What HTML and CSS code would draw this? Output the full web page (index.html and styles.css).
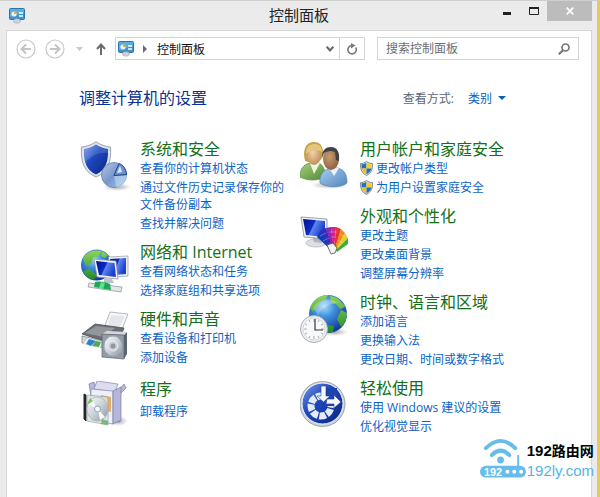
FILE: index.html
```html
<!DOCTYPE html>
<html lang="zh-CN">
<head>
    <meta charset="UTF-8">
    <meta name="viewport" content="width=device-width, initial-scale=1.0">
    <title>控制面板</title>
    <link rel="stylesheet" href="styles.css">
</head>
<body>
    <svg class="defs" aria-hidden="true">
        <defs>
            <linearGradient id="blue" x1="0" y1="0" x2="1" y2="1">
                <stop offset="0" stop-color="#7da2e8"/><stop offset=".4" stop-color="#1f49bd"/><stop offset="1" stop-color="#0b2483"/>
            </linearGradient>
            <linearGradient id="screen" x1="0" y1="0" x2="1" y2=".4">
                <stop offset="0" stop-color="#04108c"/><stop offset=".5" stop-color="#0c2cc4"/><stop offset=".56" stop-color="#5c86ee"/><stop offset="1" stop-color="#1c3fd0"/>
            </linearGradient>
            <linearGradient id="metal" x1="0" y1="0" x2="1" y2="1">
                <stop offset="0" stop-color="#fbfcfd"/><stop offset=".5" stop-color="#cdd3da"/><stop offset="1" stop-color="#8b949f"/>
            </linearGradient>
            <linearGradient id="pie" x1="0" y1="0" x2="1" y2="1">
                <stop offset="0" stop-color="#b5c9e6"/><stop offset=".5" stop-color="#7697cc"/><stop offset="1" stop-color="#a9cbed"/>
            </linearGradient>
            <radialGradient id="ocean" cx=".4" cy=".3" r=".7">
                <stop offset="0" stop-color="#a6dcfa"/><stop offset=".4" stop-color="#3f8fdd"/><stop offset="1" stop-color="#0f3998"/>
            </radialGradient>
            <linearGradient id="land" x1="0" y1="0" x2="0" y2="1">
                <stop offset="0" stop-color="#8fd454"/><stop offset="1" stop-color="#228a2c"/>
            </linearGradient>
            <radialGradient id="skin" cx=".4" cy=".3" r=".8">
                <stop offset="0" stop-color="#f4d3ac"/><stop offset="1" stop-color="#b98554"/>
            </radialGradient>
            <radialGradient id="skinDark" cx=".4" cy=".4" r=".8">
                <stop offset="0" stop-color="#c89b72"/><stop offset="1" stop-color="#7d5233"/>
            </radialGradient>
            <linearGradient id="greenShirt" x1="0" y1="0" x2="1" y2="1">
                <stop offset="0" stop-color="#a8cf7c"/><stop offset="1" stop-color="#4f8b36"/>
            </linearGradient>
            <linearGradient id="blueShirt" x1="0" y1="0" x2="1" y2="1">
                <stop offset="0" stop-color="#a9cdf0"/><stop offset="1" stop-color="#5286c0"/>
            </linearGradient>
            <radialGradient id="shadow">
                <stop offset="0" stop-color="#555" stop-opacity=".55"/><stop offset="1" stop-color="#777" stop-opacity="0"/>
            </radialGradient>
        </defs>
        <symbol id="panelIcon" viewBox="0 0 16 16">
            <rect x=".5" y=".5" width="15" height="11" rx="1" fill="#3c93cf" stroke="#2a76ab"/>
            <path d="M1 1h14v4L1 9z" fill="#73bde9" opacity=".6"/>
            <circle cx="5" cy="6" r="2.6" fill="#e9f4fa"/>
            <path d="M5 6V3a3 3 0 0 1 3 3z" fill="#f0a63a"/>
            <path d="M10 5h4M10 8h4" stroke="#fff" stroke-width="1.3"/>
            <ellipse cx="8" cy="13" rx="3.6" ry="2.2" fill="#cfd3d6" stroke="#9a9fa3" stroke-width=".5"/>
        </symbol>
        <symbol id="uac" viewBox="0 0 14 16">
            <path d="M7 .5C5 2 3 2.6.6 2.8.3 9 2 13 7 15.5 12 13 13.700 9 13.400 2.800 11 2.600 9 2 7 .5z" fill="#dfe4e9" stroke="#6f7c8a"/>
            <path d="M6.900 1.700C5.200 2.800 3.800 3.300 1.700 3.500V8h5.200z" fill="#2070bf"/>
            <path d="M7 1.700c1.800 1.100 3.200 1.600 5.300 1.800V8H7z" fill="#f8cb2c"/>
            <path d="M1.800 8h5.100v6.300C3.800 12.600 2.200 10.700 1.800 8z" fill="#f3c01e"/>
            <path d="M7 8h5.200c-.4 2.700-2 4.600-5.200 6.300z" fill="#2070bf"/>
        </symbol>
    </svg>

    <div class="window">
        <header class="titlebar">
            <svg class="title-icon"><use href="#panelIcon"/></svg>
            <h1>控制面板</h1>
            <div class="window-buttons">
                <button type="button" aria-label="最小化"><svg width="8" height="12"><path d="M0 8.500h8" stroke="#222" stroke-width="3"/></svg></button>
                <button type="button" aria-label="最大化"><svg width="10" height="8"><path d="M.5 1h9v6.500h-9z" fill="none" stroke="#222"/><path d="M0 1h10" stroke="#222" stroke-width="2"/></svg></button>
                <button type="button" class="close" aria-label="关闭"><svg width="8" height="8"><path d="M.7.700l6.600 6.600M7.300.700L.7 7.300" stroke="#fff" stroke-width="1.700"/></svg></button>
            </div>
        </header>

        <main class="panel">
            <nav class="toolbar">
                <button type="button" class="nav-button" aria-label="后退"><svg width="20" height="20"><circle cx="10" cy="10" r="9" fill="none" stroke="#c8c8c8" stroke-width="1.200"/><path d="M15 10H6M10 5.500L5.500 10l4.500 4.500" fill="none" stroke="#c4c4c4" stroke-width="2"/></svg></button>
                <button type="button" class="nav-button" aria-label="前进"><svg width="20" height="20"><circle cx="10" cy="10" r="9" fill="none" stroke="#c8c8c8" stroke-width="1.200"/><path d="M5 10h9M10 5.500l4.500 4.500-4.500 4.500" fill="none" stroke="#c4c4c4" stroke-width="2"/></svg></button>
                <button type="button" class="nav-button" aria-label="最近的位置"><svg width="7" height="4"><path d="M0 0h7L3.500 4z" fill="#c8c8c8"/></svg></button>
                <button type="button" class="nav-button" aria-label="上移"><svg width="10" height="12"><path d="M5 12V2M1 6l4-4.500L9 6" fill="none" stroke="#6b6b6b" stroke-width="2"/></svg></button>
                <div class="address">
                    <svg class="address-icon"><use href="#panelIcon"/></svg>
                    <svg width="4" height="8"><path d="M0 0l4 4-4 4z" fill="#6b6b6b"/></svg>
                    <button type="button" class="crumb">控制面板</button>
                    <button type="button" class="history" aria-label="历史记录"><svg width="8" height="6"><path d="M.7.700L4 4.500 7.300.700" fill="none" stroke="#666" stroke-width="2"/></svg></button>
                    <button type="button" class="refresh" aria-label="刷新"><svg width="12" height="12"><path d="M9.700 4.500A4.200 4.200 0 1 1 6 2.500" fill="none" stroke="#777" stroke-width="1.600"/><path d="M5 0l4.500 2.500L5 5.500z" fill="#777"/></svg></button>
                </div>
                <label class="search">
                    <input type="text" placeholder="搜索控制面板" aria-label="搜索控制面板">
                    <svg width="12" height="12"><circle cx="7.500" cy="4.500" r="3.500" fill="none" stroke="#777" stroke-width="1.700"/><path d="M5 7.200L.8 11.200" stroke="#777" stroke-width="2.200"/></svg>
                </label>
            </nav>

            <div class="heading">
                <h2>调整计算机的设置</h2>
                <div class="view">
                    <label for="viewBy">查看方式:</label>
                    <div class="view-select">
                        <select id="viewBy">
                            <option>类别</option>
                            <option>大图标</option>
                            <option>小图标</option>
                        </select>
                        <svg width="8" height="4"><path d="M0 0h8L4 4z" fill="#0a5ebd"/></svg>
                    </div>
                </div>
            </div>

            <div class="categories">
                <div class="column">
                    <section class="category">
                        <svg class="icon" viewBox="0 0 50 50">
                            <ellipse cx="37" cy="46" rx="14" ry="4" fill="url(#shadow)"/>
                            <path d="M16 .8C11 4 7 5.500 1.500 6 .5 21 4 31 16 36 28 31 31.500 21 30.500 6 25 5.500 21 4 16 .8z" fill="#dfe4ec" stroke="#8791a3" stroke-width=".8"/>
                            <path d="M16 3.500C12 6 8 7.500 4 8c-.5 13 2.500 21 12 25.500C25.500 29 28.500 21 28 8 24 7.500 20 6 16 3.500z" fill="url(#blue)"/>
                            <path d="M16 4C12 6.500 8 8 4.500 8.500 4 14 5 18 6 20.500 12 14 19 11 28 12V8.500C24 8 20 6.500 16 4z" fill="#b9cdf5" opacity=".2"/>
                            <circle cx="34" cy="34" r="12.500" fill="url(#pie)" stroke="#647ca7" stroke-width=".8"/>
                            <path d="M46.500 34.500c0 8-5 12-10 12.300L34 35z" fill="#cde6f8" opacity=".5"/>
                            <path d="M34 34.500l5-12c4 1.500 7 5 7.500 11z" fill="#6f94d6" stroke="#203e86"/>
                            <path d="M37 32l3-7 2 6z" fill="#dceafa"/>
                        </svg>
                        <div class="links">
                            <h3><a href="#">系统和安全</a></h3>
                            <a href="#">查看你的计算机状态</a>
                            <a href="#">通过文件历史记录保存你的文件备份副本</a>
                            <a href="#">查找并解决问题</a>
                        </div>
                    </section>
                    <section class="category">
                        <svg class="icon" viewBox="0 0 50 50">
                            <circle cx="16.500" cy="21" r="15.500" fill="url(#ocean)"/>
                            <path d="M3 15C6 8 13 5 22 7l-3 5-6 2-1 5-6 3zM3 27l7-2 7 6-3 5C9 35 5 32 3 27zM22 7l6 4-3 3-4-2z" fill="url(#land)"/>
                            <path d="M28 13l20-1v20l-14 1z" fill="#eef1f4" stroke="#929aa5" stroke-width=".7"/>
                            <path d="M30 15l16-1v16l-12 1z" fill="url(#screen)"/>
                            <path d="M14 15l22 2 2 18-21-2z" fill="#f1f3f6" stroke="#828b98" stroke-width=".7"/>
                            <path d="M16 17l18.500 2L36 33l-17-2z" fill="url(#screen)"/>
                            <path d="M24 34l8 1 2 4h-10z" fill="#bcc3cb"/>
                            <path d="M9 39l33 4-1 5L8 43z" fill="#e2e6e8" stroke="#899198" stroke-width=".7"/>
                            <path d="M15 38c5-1 11 0 15 2l1 6-17-3z" fill="#19a957"/>
                            <path d="M21 38l4 1-2 6-4-1z" fill="#65db8c"/>
                        </svg>
                        <div class="links">
                            <h3><a href="#">网络和 Internet</a></h3>
                            <a href="#">查看网络状态和任务</a>
                            <a href="#">选择家庭组和共享选项</a>
                        </div>
                    </section>
                    <section class="category">
                        <svg class="icon" viewBox="0 0 50 50">
                            <path d="M30 1l18 2-7 18-17-4z" fill="#f6f7f8" stroke="#979da3" stroke-width=".7"/>
                            <path d="M31 4l14 1-6 12-11-3z" fill="#e3e6ea"/>
                            <path d="M2 23l13-10 29 4-3 8-18 5z" fill="#6a6e73" stroke="#44484d" stroke-width=".7"/>
                            <path d="M5 22l11-7 19 2-12 9z" fill="#92979c"/>
                            <path d="M2 25l22 5v7L2 32z" fill="#cfd2d6" stroke="#777c82" stroke-width=".7"/>
                            <path d="M8 27l14 4-2 6-17-4z" fill="#e9f1f5"/>
                            <path d="M9 28l7 2-5 5-5-2z" fill="#2d82cc"/><path d="M16 30l5 1-2 5-7-1z" fill="#51a950"/>
                            <path d="M22 23l5-3 20 1-4 3z" fill="#d5d9de"/>
                            <path d="M22 23l22 1v24l-22-2z" fill="#939da7" stroke="#59636d" stroke-width=".7"/>
                            <path d="M44 24l3-3v22l-3 5z" fill="#5b6570"/>
                            <ellipse cx="33" cy="35" rx="9" ry="10" fill="url(#metal)" stroke="#a5adb5"/>
                            <circle cx="33" cy="35" r="5" fill="#c9d0d6" stroke="#eceff1"/><circle cx="33" cy="35" r="2.500" fill="#8d97a1"/>
                        </svg>
                        <div class="links">
                            <h3><a href="#">硬件和声音</a></h3>
                            <a href="#">查看设备和打印机</a>
                            <a href="#">添加设备</a>
                        </div>
                    </section>
                    <section class="category category-short">
                        <svg class="icon" viewBox="0 0 50 50">
                            <ellipse cx="38" cy="40" rx="10" ry="5" fill="url(#shadow)"/>
                            <path d="M9 3l5-2 2 7 23 1 5-6 2 4-6 6v28l-25-3z" fill="#b8b9da" stroke="#7778a4" stroke-width=".7"/>
                            <path d="M17 0l21 3-3 8-21-3z" fill="#dcddf1" stroke="#8283aa" stroke-width=".7"/>
                            <path d="M11 8l22 2v33l-22-4z" fill="#eceef8" stroke="#8b8cad" stroke-width=".7"/>
                            <path d="M33 10l8-4v33l-8 4z" fill="#b4b6da" stroke="#7879a4" stroke-width=".7"/>
                            <path d="M21 14l10 2v15l-10-2z" fill="#e9ad61"/>
                            <path d="M4 13l2 1v26l-2-2z" fill="#24272a" stroke="#24272a"/>
                            <path d="M7 14l21 2v28L7 40z" fill="#dbe4e3" opacity=".85" stroke="#94a29e" stroke-width=".8"/>
                            <ellipse cx="17.500" cy="28" rx="10.500" ry="12" fill="url(#metal)" stroke="#a7adad" stroke-width=".7"/>
                            <path d="M17 28l-9-5 4-5zM18 28l7 8-5 3z" fill="#f7faf9"/><path d="M7 24l6-4-3-3z" fill="#77c656"/>
                            <circle cx="17.500" cy="28" r="3" fill="#f4f7f7" stroke="#8da8af"/><path d="M22 38l6 2v4l-7-1z" fill="#78b87b"/>
                        </svg>
                        <div class="links">
                            <h3><a href="#">程序</a></h3>
                            <a href="#">卸载程序</a>
                        </div>
                    </section>
                </div>

                <div class="column">
                    <section class="category">
                        <svg class="icon" viewBox="0 0 50 50">
                            <ellipse cx="30" cy="44" rx="19" ry="4" fill="url(#shadow)"/>
                            <path d="M0 36c0-9 4-12 9-14h10c5 3 6 7 6 14-7 4-18 4-25 0z" fill="url(#greenShirt)" stroke="#4b7d35" stroke-width=".6"/>
                            <path d="M10 22l4 11 6-11z" fill="#edf4e2"/>
                            <path d="M4 14C4 5 8 1 14 1c7 0 10 6 9 15l-4 5H8l-3-1z" fill="#c7a14c"/>
                            <ellipse cx="14" cy="15" rx="6.500" ry="9" fill="url(#skin)"/>
                            <path d="M6 13C6 5 10 3 15 3c5 0 7 4 7 8-5-3-11-3-16 2z" fill="#e3c77b"/>
                            <path d="M20 42c-1-9 4-13 10-15h8c7 2 9 7 9 15-6 5-20 5-27 0z" fill="url(#blueShirt)" stroke="#50799f" stroke-width=".6"/>
                            <path d="M29 27l5 8 5-8z" fill="#e8f3fb"/>
                            <ellipse cx="31" cy="18" rx="8" ry="11" fill="url(#skinDark)"/>
                            <path d="M22 16c0-7 4-10 9-10 6 0 9 5 8 14l-3-1-1-8c-4-2-8-1-11 1z" fill="#3e4247"/>
                        </svg>
                        <div class="links">
                            <h3><a href="#">用户帐户和家庭安全</a></h3>
                            <a href="#" class="shielded"><svg class="uac"><use href="#uac"/></svg>更改帐户类型</a>
                            <a href="#" class="shielded"><svg class="uac"><use href="#uac"/></svg>为用户设置家庭安全</a>
                        </div>
                    </section>
                    <section class="category">
                        <svg class="icon" viewBox="0 0 50 50">
                            <ellipse cx="16" cy="35" rx="10" ry="4" fill="#dce0e4" stroke="#a3a8ad" stroke-width=".6"/>
                            <path d="M12 28l9 1 1 6-8-1z" fill="#aeb5bc"/>
                            <path d="M1 9l26 2v20L4 29z" fill="#eef0f3" stroke="#858e98" stroke-width=".8"/>
                            <path d="M3 11l22 2v16L6 27z" fill="url(#screen)"/>
                            <path d="M31 42L17 29l4-7 12 20z" fill="#1638be"/>
                            <path d="M32 42L21 22l5-2 8 22z" fill="#3c2bb4"/>
                            <path d="M33 42L26 20l5-1 3 23z" fill="#8a25b4"/>
                            <path d="M33 42L31 19l5 0-2 23z" fill="#d4208c"/>
                            <path d="M34 42L36 19l5 2-6 21z" fill="#e5332f"/>
                            <path d="M34 42L41 21l4 4-9 17z" fill="#f08a20"/>
                            <path d="M35 42L45 25l3 5-12 12z" fill="#e3cf2b"/>
                            <path d="M36 42l12-12v6l-11 8z" fill="#42ab3c"/>
                            <path d="M20 28l6-3M23 33l6-3M27 37l4-2M29 24h8M31 29h5M40 26l5 3M38 32l5 3" stroke="#fff" stroke-width=".6" opacity=".5"/>
                            <path d="M27 37l6-2 4 5-2 5-4 1z" fill="#f1f2f4" stroke="#34383f" stroke-width=".7"/>
                        </svg>
                        <div class="links">
                            <h3><a href="#">外观和个性化</a></h3>
                            <a href="#">更改主题</a>
                            <a href="#">更改桌面背景</a>
                            <a href="#">调整屏幕分辨率</a>
                        </div>
                    </section>
                    <section class="category">
                        <svg class="icon" viewBox="0 0 50 50">
                            <ellipse cx="34" cy="38" rx="14" ry="4" fill="url(#shadow)"/>
                            <circle cx="28" cy="20" r="19" fill="url(#ocean)"/>
                            <path d="M10 14C14 5 20 1 28 1l-3 5-5 1-2 5-5 6zM30 2c7 1 12 5 15 11l-5 2-4-5-5-1zM41 16l6 3c0 6-2 10-6 14l-4-8zM28 31l6 1-1 6-7 1z" fill="url(#land)"/>
                            <path d="M13 14C19 5 30 3 38 9c-8 0-16 4-20 12z" fill="#fff" opacity=".25"/>
                            <circle cx="14" cy="35" r="13.500" fill="#eceff2" stroke="#aab1b8"/>
                            <circle cx="14" cy="35" r="11" fill="#f7f8fa" stroke="#c8cdd2" stroke-width=".7"/>
                            <path d="M14 25v3M14 42v3M4 35h3M21 35h3M9 26l1 2M19 26l-1 2M9 44l1-2M19 44l-1-2M5 30l2 1M23 30l-2 1M5 40l2-1M23 40l-2-1" stroke="#a9afb5"/>
                            <path d="M15 25v11h8" fill="none" stroke="#30353b" stroke-width="1.200"/>
                        </svg>
                        <div class="links">
                            <h3><a href="#">时钟、语言和区域</a></h3>
                            <a href="#">添加语言</a>
                            <a href="#">更换输入法</a>
                            <a href="#">更改日期、时间或数字格式</a>
                        </div>
                    </section>
                    <section class="category">
                        <svg class="icon" viewBox="0 0 50 50">
                            <circle cx="22.500" cy="24" r="22.500" fill="#cbd2dc" stroke="#8993a1" stroke-width=".8"/>
                            <circle cx="22.500" cy="23.500" r="20.500" fill="url(#blue)" stroke="#f4f6f9"/>
                            <circle cx="21" cy="26" r="10" fill="none" stroke="#e3ebf6" stroke-width="7" stroke-dasharray="6.500 1.350" stroke-dashoffset="-3"/>
                            <path d="M21 26V8h16v18z" fill="#1d43ac"/>
                            <path d="M21 6h5v10h4l-6.500 6-6.500-6h4z" fill="#f7f9fc" stroke="#1d3e9b" stroke-width=".6"/>
                            <path d="M27 19h7v-4l7 7-7 6v-4h-8z" fill="#f7f9fc" stroke="#1d3e9b" stroke-width=".6"/>
                        </svg>
                        <div class="links">
                            <h3><a href="#">轻松使用</a></h3>
                            <a href="#">使用 Windows 建议的设置</a>
                            <a href="#">优化视觉显示</a>
                        </div>
                    </section>
                </div>
            </div>
        </main>
    </div>

    <div class="watermark">
        <svg width="47" height="42" viewBox="0 0 48 42">
            <g fill="none" stroke="#67bdea" stroke-width="4" stroke-linecap="round">
                <path d="M6 10Q21-5 36 10"/><path d="M12 17q9-9 18 0"/>
            </g>
            <circle cx="21" cy="22" r="3.500" fill="#67bdea"/>
            <path d="M39 17v12" stroke="#67bdea" stroke-width="2"/>
            <rect y="28" width="47" height="12" rx="6" fill="#67bdea"/>
            <text x="4" y="38" class="router-text">192</text>
            <g fill="#fff"><circle cx="28" cy="34" r="2"/><circle cx="35" cy="34" r="2"/><circle cx="42" cy="34" r="2"/></g>
        </svg>
        <div class="watermark-text">
            <strong>192<span>路由网</span></strong>
            <span class="site">192ly.com</span>
        </div>
    </div>
</body>
</html>
```

FILE: styles.css
```css
* {
    box-sizing: border-box;
}
body {
    margin: 0;
    font-family: "Open Sans", "Noto Sans CJK SC", sans-serif;
    font-size: 12px;
    color: #222;
    background: #ebebeb;
}
button, input, select {
    margin: 0;
    padding: 0;
    border: none;
    background: none;
    font: inherit;
    color: inherit;
}
button {
    display: flex;
    align-items: center;
    justify-content: center;
}
h1, h2, h3 {
    margin: 0;
    font-weight: normal;
}
a {
    color: #0a64c8;
    text-decoration: none;
}
a:hover {
    text-decoration: underline;
}
svg {
    display: block;
    flex-shrink: 0;
}
.defs {
    position: absolute;
    width: 0;
    height: 0;
}
.window {
    display: flex;
    flex-direction: column;
    min-height: 100vh;
    padding: 0 5px 0 6px;
    border-top: 1px solid #cfcfcf;
    border-right: 3px solid #e8c765;
}

/* title bar */
.titlebar {
    display: grid;
    grid-template-columns: 1fr auto 1fr;
    height: 29px;
}
.title-icon {
    width: 16px;
    height: 16px;
    margin: 7px 0 0 3px;
}
.titlebar h1 {
    font-size: 15px;
    line-height: 29px;
}
.window-buttons {
    display: flex;
    justify-content: flex-end;
}
.window-buttons button {
    width: 27px;
    height: 20px;
}
.window-buttons .close {
    width: 45px;
    background: #bcbcbc;
}

/* content */
.panel {
    flex: 1;
    border: 1px solid #d6d6d6;
    border-bottom: none;
    background: #fff;
}
.toolbar {
    display: flex;
    align-items: center;
    padding: 6px 12px 0 9px;
}
.nav-button {
    height: 20px;
    margin-right: 9px;
}
.nav-button:nth-child(3) {
    margin: 0 13px 0 2px;
}
.address, .search {
    display: flex;
    align-items: center;
    height: 23px;
    border: 1px solid #d4d4d4;
}
.address {
    flex: 246;
    padding-left: 2px;
}
.address-icon {
    width: 16px;
    height: 16px;
    margin-right: 9px;
}
.crumb {
    margin-left: 10px;
    color: #111;
}
.history {
    width: 18px;
    height: 21px;
    margin-left: auto;
}
.refresh {
    width: 25px;
    height: 21px;
    border-left: 1px solid #d4d4d4;
}
.search {
    flex: 184;
    margin-left: 12px;
    padding: 0 8px;
}
.search input {
    flex: 1;
    min-width: 0;
    outline: none;
}
.search input::placeholder {
    color: #6e6e6e;
    opacity: 1;
}
.heading {
    display: flex;
    align-items: center;
    justify-content: space-between;
    padding: 26px 85px 0 72px;
}
.heading h2 {
    font-size: 16px;
    line-height: 24px;
    color: #0a3390;
}
.view {
    display: flex;
    align-items: center;
    gap: 14px;
    color: #5a6775;
}
.view-select {
    display: flex;
    align-items: center;
    gap: 6px;
    color: #0a5ebd;
}
.view select {
    appearance: none;
    width: 24px;
}

/* categories */
.categories {
    display: grid;
    grid-template-columns: 210px 210px;
    gap: 10px;
    padding: 28px 0 32px 73px;
}
.column {
    display: flex;
    flex-direction: column;
    gap: 9px;
}
.category {
    display: flex;
    align-items: flex-start;
    gap: 10px;
}
.icon {
    width: 50px;
    height: 50px;
    margin-top: 3px;
}
.category-short {
    padding-top: 3px;
}
.links {
    display: flex;
    flex: 1;
    flex-direction: column;
    align-items: flex-start;
    gap: 2px;
    line-height: 17px;
}
.links h3 {
    margin-bottom: -2px;
    font-size: 16px;
    line-height: 22px;
}
.links h3 a {
    color: #12701a;
}
.category-short h3 {
    margin-bottom: 1px;
}
.shielded {
    display: flex;
    align-items: center;
    gap: 3px;
}
.uac {
    width: 13px;
    height: 15px;
}

/* site mark over the window corner */
.watermark {
    position: absolute;
    right: 6px;
    bottom: 17px;
    display: flex;
    align-items: flex-end;
}
.router-text {
    font: bold 11px "Liberation Sans", sans-serif;
    fill: #fff;
}
.watermark-text {
    display: flex;
    flex-direction: column;
    font-family: "Liberation Sans", "Noto Sans CJK SC", sans-serif;
    font-size: 15px;
    line-height: 19px;
}
.watermark-text strong {
    color: #000;
    white-space: nowrap;
}
.watermark-text strong span {
    font-size: 14px;
}
.site {
    color: #53b4e8;
}
```
